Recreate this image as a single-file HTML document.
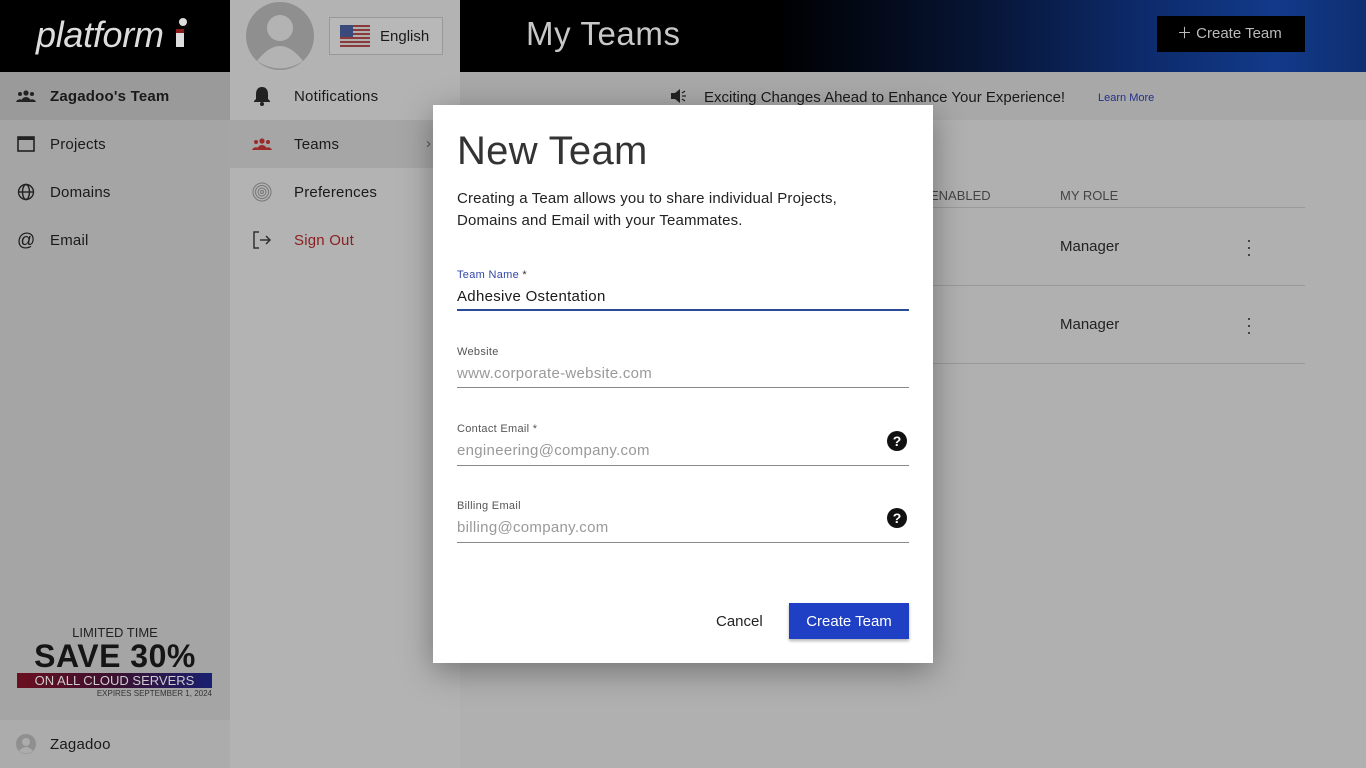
<!DOCTYPE html>
<html><head><meta charset="utf-8">
<style>
*{margin:0;padding:0;box-sizing:border-box}
body{width:1366px;height:768px;overflow:hidden;font-family:"Liberation Sans",sans-serif;background:#b0b0b0;position:relative;color:#111}
.abs{position:absolute}
.hdr1{left:0;top:0;width:230px;height:72px;background:#000}
.hdr2{left:230px;top:0;width:230px;height:72px;background:#b3b3b3}
.hdr3{left:460px;top:0;width:906px;height:72px;background:linear-gradient(90deg,#000 0%,#000 35%,#06122e 55%,#0d2a6a 75%,#123a8a 90%,#0e2f70 100%)}
.side1{left:0;top:72px;width:230px;height:648px;background:#a5a5a5}
.side2{left:230px;top:72px;width:230px;height:696px;background:#b3b3b3}
.foot{left:0;top:720px;width:230px;height:48px;background:#acacac}
.item{position:absolute;font-size:15px;letter-spacing:.2px;color:#1a1a1a}
.dlg{left:433px;top:105px;width:500px;height:558px;background:#fff;box-shadow:0 8px 30px rgba(0,0,0,.35)}
.lbl{position:absolute;left:24px;font-size:11px;color:#555;letter-spacing:.3px}
.val{position:absolute;left:24px;font-size:15px;color:#999;letter-spacing:.3px}
.line{position:absolute;left:24px;width:452px;height:1px;background:#888}
.q{position:absolute;left:454px;width:20px;height:20px;border-radius:50%;background:#111;color:#fff;font-size:14px;text-align:center;line-height:20px;font-weight:bold}
</style></head><body>
<div class="abs hdr1"></div>
<div class="abs" style="left:36px;top:14px;font-size:36px;font-style:italic;color:#ddd;letter-spacing:-.3px">platform</div>
<div class="abs" style="left:176px;top:18px;width:12px;height:30px"><div style="width:8px;height:8px;border-radius:50%;background:#ddd;margin-left:3px"></div><div style="width:8px;height:18px;background:#ddd;margin-top:3px;border-top:4px solid #8b1a1a"></div></div>
<div class="abs hdr2"></div>
<svg class="abs" style="left:245px;top:1px" width="70" height="70" viewBox="0 0 70 70"><circle cx="35" cy="35" r="34" fill="#8f8f8f"/><circle cx="35" cy="27" r="13" fill="#b3b3b3"/><path d="M12 60 Q35 30 58 60 Q35 75 12 60Z" fill="#b3b3b3"/></svg>
<div class="abs" style="left:329px;top:17px;width:114px;height:38px;border:1px solid #999;background:#b8b8b8"></div>
<svg class="abs" style="left:340px;top:25px" width="30" height="22" viewBox="0 0 30 22"><rect width="30" height="22" fill="#b0b0b0"/><g fill="#8b3a3a"><rect y="0" width="30" height="2"/><rect y="4" width="30" height="2"/><rect y="8" width="30" height="2"/><rect y="12" width="30" height="2"/><rect y="16" width="30" height="2"/><rect y="20" width="30" height="2"/></g><rect width="13" height="12" fill="#3a4a7a"/></svg>
<div class="abs" style="left:380px;top:28px;font-size:15px;color:#1a1a1a">English</div>
<div class="abs hdr3"></div>
<div class="abs" style="left:526px;top:15px;font-size:33px;color:#c8c8c8;letter-spacing:.6px">My Teams</div>
<div class="abs" style="left:1157px;top:16px;width:148px;height:36px;background:#000;color:#bbb;font-size:15px;line-height:36px;padding-left:20px">＋ Create Team</div>

<div class="abs side1"></div>
<div class="abs" style="left:0;top:72px;width:230px;height:48px;background:#9a9a9a"></div>
<div class="abs side2"></div>
<div class="abs" style="left:230px;top:120px;width:230px;height:48px;background:#a6a6a6"></div>
<div class="abs foot"></div>

<svg class="abs" style="left:16px;top:88px" width="20" height="16" viewBox="0 0 20 16" fill="#222"><circle cx="10" cy="5" r="2.6"/><circle cx="4" cy="6" r="2"/><circle cx="16" cy="6" r="2"/><path d="M5 14a5 5 0 0110 0z"/><path d="M0 14a4 4 0 016-2v2z"/><path d="M20 14a4 4 0 00-6-2v2z"/></svg>
<div class="item" style="left:50px;top:88px;font-weight:bold">Zagadoo's Team</div>
<svg class="abs" style="left:17px;top:136px" width="18" height="16"><rect x="1" y="1" width="16" height="14" fill="none" stroke="#222" stroke-width="1.6"/><rect x="1" y="1" width="16" height="3" fill="#222"/></svg>
<div class="item" style="left:50px;top:136px">Projects</div>
<svg class="abs" style="left:17px;top:183px" width="18" height="18" viewBox="0 0 18 18" fill="none" stroke="#222" stroke-width="1.4"><circle cx="9" cy="9" r="7.5"/><ellipse cx="9" cy="9" rx="3.5" ry="7.5"/><path d="M1.5 9h15"/></svg>
<div class="item" style="left:50px;top:184px">Domains</div>
<div class="item" style="left:17px;top:230px;font-size:18px">@</div>
<div class="item" style="left:50px;top:232px">Email</div>

<svg class="abs" style="left:253px;top:86px" width="18" height="20" viewBox="0 0 18 20" fill="#222"><path d="M9 1c-4 0-6 3-6 7v5l-2 2v1h16v-1l-2-2V8c0-4-2-7-6-7z"/><circle cx="9" cy="18" r="2"/></svg>
<div class="item" style="left:294px;top:88px">Notifications</div>
<svg class="abs" style="left:250px;top:136px" width="24" height="16" viewBox="0 0 20 16" fill="#9b2b2b"><circle cx="10" cy="5" r="2.6"/><circle cx="4" cy="6" r="2"/><circle cx="16" cy="6" r="2"/><path d="M5 14a5 5 0 0110 0z"/><path d="M0 14a4 4 0 016-2v2z"/><path d="M20 14a4 4 0 00-6-2v2z"/></svg>
<div class="item" style="left:294px;top:136px">Teams</div>
<div class="item" style="left:426px;top:135px;color:#555">›</div>
<svg class="abs" style="left:252px;top:181px" width="20" height="22" viewBox="0 0 20 22" fill="none" stroke="#777" stroke-width="1"><circle cx="10" cy="11" r="9"/><circle cx="10" cy="11" r="6.5"/><circle cx="10" cy="11" r="4"/><circle cx="10" cy="11" r="1.5"/></svg>
<div class="item" style="left:294px;top:184px">Preferences</div>
<svg class="abs" style="left:252px;top:230px" width="20" height="20" viewBox="0 0 20 20" fill="none" stroke="#333" stroke-width="1.5"><path d="M7 2H2v16h5M8 10h10M14 6l4 4-4 4"/></svg>
<div class="item" style="left:294px;top:232px;color:#8b2020">Sign Out</div>

<div class="abs" style="left:0;top:625px;width:230px;text-align:center;font-size:13px;color:#222">LIMITED TIME</div>
<div class="abs" style="left:0;top:638px;width:230px;text-align:center;font-size:32px;font-weight:bold;color:#151515;letter-spacing:.5px">SAVE 30%</div>
<div class="abs" style="left:17px;top:673px;width:195px;height:15px;background:linear-gradient(90deg,#6a1020,#3a1030 50%,#1a2070);color:#ccc;font-size:13px;line-height:15px;text-align:center">ON ALL CLOUD SERVERS</div>
<div class="abs" style="left:17px;top:689px;width:195px;text-align:right;font-size:8px;color:#333">EXPIRES SEPTEMBER 1, 2024</div>
<svg class="abs" style="left:16px;top:734px" width="20" height="20" viewBox="0 0 20 20"><circle cx="10" cy="10" r="10" fill="#8f8f8f"/><circle cx="10" cy="8" r="4" fill="#acacac"/><path d="M3 17Q10 9 17 17Q10 22 3 17Z" fill="#acacac"/></svg>
<div class="item" style="left:50px;top:736px">Zagadoo</div>

<div class="abs" style="left:460px;top:72px;width:906px;height:48px;background:#a8a8a8"></div>
<svg class="abs" style="left:670px;top:88px" width="18" height="16" viewBox="0 0 18 16" fill="#222"><path d="M1 5h4l5-4v14l-5-4H1z"/><path d="M12 5l3-2M12 8h4M12 11l3 2" stroke="#222" stroke-width="1.3"/></svg>
<div class="abs" style="left:704px;top:89px;font-size:15px;color:#1a1a1a">Exciting Changes Ahead to Enhance Your Experience!</div>
<div class="abs" style="left:1098px;top:92px;font-size:11px;color:#23308a">Learn More</div>
<div class="abs" style="left:930px;top:188px;font-size:13px;color:#444">ENABLED</div>
<div class="abs" style="left:1060px;top:188px;font-size:13px;color:#444">MY ROLE</div>
<div class="abs" style="left:933px;top:207px;width:372px;height:1px;background:#999"></div>
<div class="abs" style="left:1060px;top:238px;font-size:15px;color:#222">Manager</div>
<div class="abs" style="left:1246px;top:237px;font-size:18px;color:#333;line-height:7px">·<br>·<br>·</div>
<div class="abs" style="left:933px;top:285px;width:372px;height:1px;background:#999"></div>
<div class="abs" style="left:1060px;top:316px;font-size:15px;color:#222">Manager</div>
<div class="abs" style="left:1246px;top:315px;font-size:18px;color:#333;line-height:7px">·<br>·<br>·</div>
<div class="abs" style="left:933px;top:363px;width:372px;height:1px;background:#999"></div>
<div class="abs" style="left:928px;top:236px;font-size:15px;color:#2f6a2f">)</div>
<div class="abs" style="left:928px;top:314px;font-size:15px;color:#2f6a2f">)</div>

<div class="abs dlg">
 <div class="abs" style="left:24px;top:24px;font-size:40px;color:#333;letter-spacing:.3px">New Team</div>
 <div class="abs" style="left:24px;top:83px;font-size:15px;line-height:22px;color:#222;width:440px;letter-spacing:.15px">Creating a Team allows you to share individual Projects,<br>Domains and Email with your Teammates.</div>
 <div class="lbl" style="top:164px;color:#3346a8">Team Name <span style="color:#333">*</span></div>
 <div class="val" style="top:183px;color:#1a1a1a">Adhesive Ostentation</div>
 <div class="line" style="top:204px;height:2px;background:#2a4a9a;width:452px"></div>
 <div class="lbl" style="top:241px">Website</div>
 <div class="val" style="top:260px">www.corporate-website.com</div>
 <div class="line" style="top:282px"></div>
 <div class="lbl" style="top:318px">Contact Email *</div>
 <div class="val" style="top:337px">engineering@company.com</div>
 <div class="q" style="top:326px">?</div>
 <div class="line" style="top:360px"></div>
 <div class="lbl" style="top:395px">Billing Email</div>
 <div class="val" style="top:414px">billing@company.com</div>
 <div class="q" style="top:403px">?</div>
 <div class="line" style="top:437px"></div>
 <div class="abs" style="left:283px;top:508px;font-size:15px;color:#222">Cancel</div>
 <div class="abs" style="left:356px;top:498px;width:120px;height:36px;background:#1f3fc4;color:#fff;font-size:15px;line-height:37px;text-align:center;box-shadow:0 2px 3px rgba(0,0,0,.3)">Create Team</div>
</div>
</body></html>
